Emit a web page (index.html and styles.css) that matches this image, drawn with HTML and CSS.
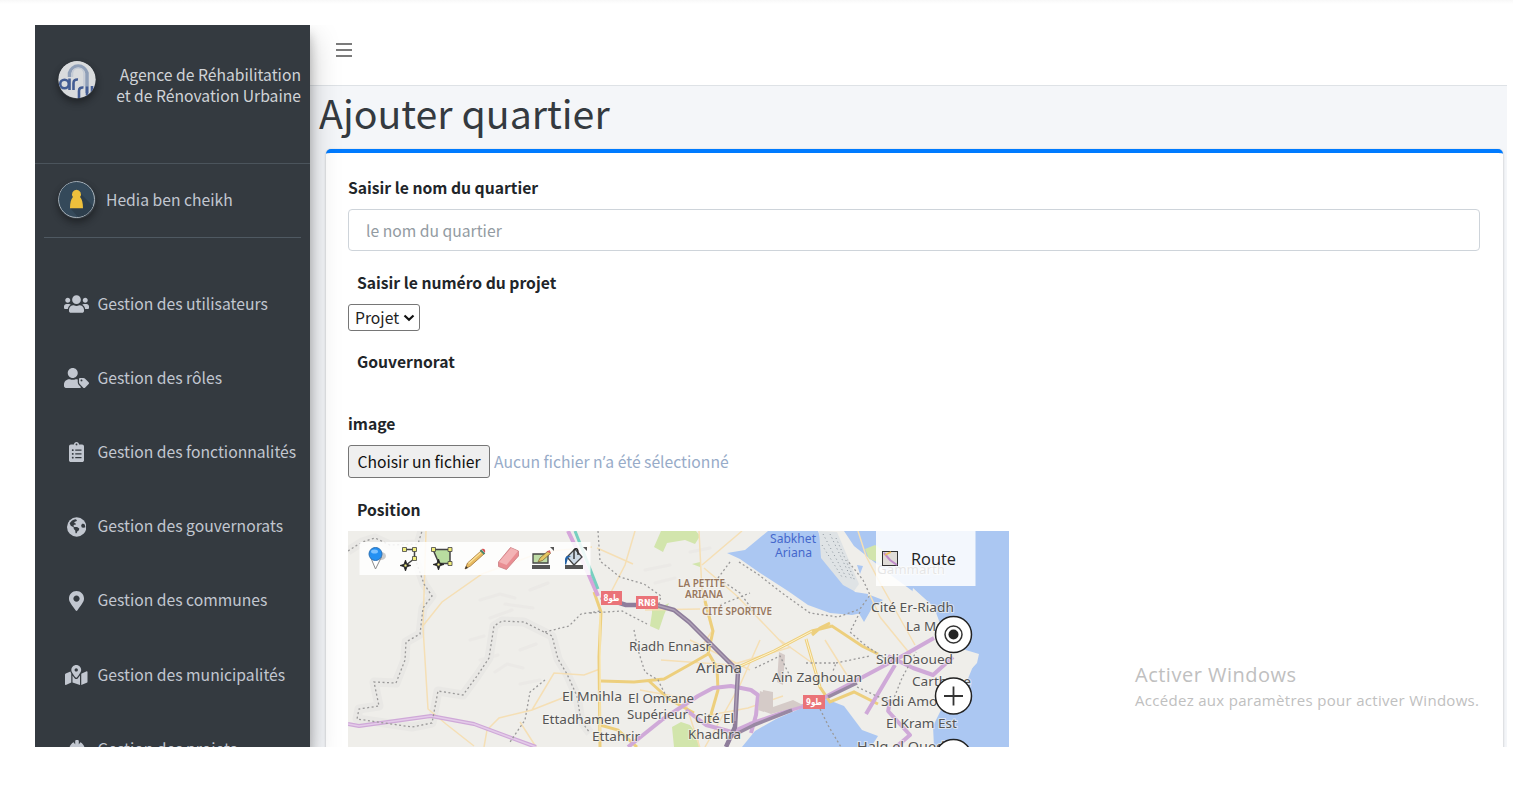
FILE: index.html
```html
<!DOCTYPE html>
<html lang="fr">
<head>
<meta charset="utf-8">
<title>Ajouter quartier</title>
<link rel="stylesheet" href="styles.css">
</head>
<body>
<div class="topline"></div>
<div class="app">
  <aside class="sidebar">
    <div class="brand">
      <svg class="avatar" viewBox="0 0 38 38">
        <defs><clipPath id="round"><circle cx="19" cy="18.500" r="18.700"/></clipPath></defs>
        <g clip-path="url(#round)" fill="none">
          <rect width="38" height="38" fill="#d9dbdd"/>
          <path d="M11.500 16V12a9 9 0 0 1 17.500 0v20" stroke="#8f9fb8" stroke-width="3.500"/>
          <path d="M14.500 16v-4a5.800 5.800 0 0 1 11.500 0v13" stroke="#c3cad5" stroke-width="1.500"/>
          <g stroke="#435c93" stroke-width="2.600">
            <circle cx="6.500" cy="23" r="4.300"/><path d="M11.500 17.500v11.500M15.500 29v-7q0-3.800 4.500-3.500M21 37v-7q0-4 4.500-3.500M29 25.500v8q1 3 5 1V25"/>
          </g>
        </g>
      </svg>
      <div class="brand-text">Agence de Réhabilitation<br>et de Rénovation Urbaine</div>
    </div>
    <div class="user">
      <svg class="avatar" viewBox="0 0 38 38">
        <circle cx="18.500" cy="18.500" r="18" fill="#34495a" stroke="#a9b3bb" stroke-width="1"/>
        <path d="M22 12l13 13a18 18 0 0 1-15 11l-7-8z" fill="#2d3e4c"/>
        <path d="M18.500 8.800a4.600 4.600 0 0 1 3.600 7.300c2 2.400 2.900 6 2.900 11.200H12c0-5.200.9-8.800 2.900-11.200a4.600 4.600 0 0 1 3.600-7.300z" fill="#eec03c"/>
      </svg>
      <span>Hedia ben cheikh</span>
    </div>
    <nav class="menu">
      <a class="item"><span class="ico"><svg viewBox="0 0 640 512"><path d="M96 224c35.300 0 64-28.700 64-64s-28.700-64-64-64-64 28.700-64 64 28.700 64 64 64zm448 0c35.300 0 64-28.700 64-64s-28.700-64-64-64-64 28.700-64 64 28.700 64 64 64zm32 32h-64c-17.600 0-33.500 7.100-45.100 18.600 40.300 22.100 68.900 62 75.100 109.400h66c17.700 0 32-14.300 32-32v-32c0-35.300-28.700-64-64-64zm-256 0c61.900 0 112-50.100 112-112S381.900 32 320 32 208 82.100 208 144s50.100 112 112 112zm76.800 32h-8.300c-20.800 10-43.900 16-68.500 16s-47.600-6-68.500-16h-8.300C179.600 288 128 339.600 128 403.200V432c0 26.500 21.500 48 48 48h288c26.500 0 48-21.500 48-48v-28.800c0-63.600-51.600-115.200-115.200-115.200zm-223.700-13.400C161.500 263.100 145.600 256 128 256H64c-35.300 0-64 28.700-64 64v32c0 17.700 14.300 32 32 32h65.900c6.300-47.400 34.900-87.300 75.200-109.400z"/></svg></span><span class="item-text">Gestion des utilisateurs</span></a>
      <a class="item"><span class="ico"><svg viewBox="0 0 640 512"><path d="M630.600 364.900l-90.300-90.200c-12-12-28.300-18.700-45.300-18.700h-79.300c-17.700 0-32 14.300-32 32v79.200c0 17 6.700 33.200 18.700 45.200l90.300 90.200c12.500 12.500 32.800 12.500 45.300 0l92.500-92.500c12.600-12.500 12.600-32.700.1-45.200zm-182.800-21c-13.300 0-24-10.700-24-24s10.700-24 24-24 24 10.700 24 24c0 13.200-10.700 24-24 24zm-223.800-88c70.700 0 128-57.300 128-128C352 57.300 294.700 0 224 0S96 57.300 96 128c0 70.600 57.300 127.900 128 127.900zm127.800 111.200V294c-12.200-3.600-24.900-6.200-38.200-6.200h-16.700c-22.200 10.200-46.900 16-72.900 16s-50.600-5.800-72.900-16h-16.700C60.200 287.900 0 348.100 0 422.300v41.600c0 26.500 21.500 48 48 48h352c15.500 0 29.100-7.500 37.900-18.900l-58-58c-18.100-18.100-28.100-42.200-28.100-67.900z"/></svg></span><span class="item-text">Gestion des rôles</span></a>
      <a class="item"><span class="ico"><svg viewBox="0 0 384 512"><path fill-rule="evenodd" d="M336 64h-80c0-35.300-28.700-64-64-64s-64 28.700-64 64H48C21.500 64 0 85.500 0 112v352c0 26.500 21.500 48 48 48h288c26.500 0 48-21.500 48-48V112c0-26.500-21.500-48-48-48zM96 424c-13.300 0-24-10.700-24-24s10.700-24 24-24 24 10.700 24 24-10.700 24-24 24zm0-96c-13.300 0-24-10.700-24-24s10.700-24 24-24 24 10.700 24 24-10.700 24-24 24zm0-96c-13.300 0-24-10.700-24-24s10.700-24 24-24 24 10.700 24 24-10.700 24-24 24zm96-192c13.300 0 24 10.700 24 24s-10.700 24-24 24-24-10.700-24-24 10.700-24 24-24zM160 192h160v32H160zM160 288h160v32H160zM160 384h160v32H160z"/></svg></span><span class="item-text">Gestion des fonctionnalités</span></a>
      <a class="item"><span class="ico"><svg viewBox="0 0 496 512"><circle cx="248" cy="256" r="248"/><path class="hole" d="M95 125c35-40 80-63 130-66l30 22-15 30-40 12-18 28 35 10 12 30-42 5-28 32 30 28 70 0 55 40-8 40-38 28-22 54-28 0-8-74-36-40-6-44-72-38-28-62zM372 190l34-26 48 26 16 70-40 18-50-12-18-40z"/></svg></span><span class="item-text">Gestion des gouvernorats</span></a>
      <a class="item"><span class="ico"><svg viewBox="0 0 384 512"><path d="M172.268 501.670C26.970 291.031 0 269.413 0 192 0 85.961 85.961 0 192 0s192 85.961 192 192c0 77.413-26.970 99.031-172.268 309.670-9.535 13.774-29.930 13.773-39.464 0zM192 272c44.183 0 80-35.817 80-80s-35.817-80-80-80-80 35.817-80 80 35.817 80 80 80z"/></svg></span><span class="item-text">Gestion des communes</span></a>
      <a class="item"><span class="ico"><svg viewBox="0 0 576 512"><path d="M288 0c-69.590 0-126 56.410-126 126 0 56.260 82.350 158.800 113.900 196.020 6.390 7.540 17.820 7.540 24.200 0C331.650 284.800 414 182.260 414 126 414 56.410 357.590 0 288 0zm0 168c-23.200 0-42-18.800-42-42s18.800-42 42-42 42 18.800 42 42-18.800 42-42 42zM20.120 215.950A32.006 32.006 0 0 0 0 245.660v250.320c0 11.320 11.430 19.060 21.940 14.860L160 448V214.920c-8.840-15.980-16.070-31.540-21.250-46.420L20.120 215.950zM288 359.670c-14.070 0-27.380-6.180-36.510-16.960-19.660-23.200-40.570-49.620-59.490-76.720v182l192 64V266c-18.920 27.090-39.820 53.520-59.490 76.720-9.130 10.770-22.440 16.950-36.510 16.950zm266.060-198.510L416 224v288l139.880-55.950A31.996 31.996 0 0 0 576 426.340V176.020c0-11.320-11.430-19.060-21.940-14.860z"/></svg></span><span class="item-text">Gestion des municipalités</span></a>
      <a class="item"><span class="ico"><svg viewBox="0 0 512 512"><path d="M50 350v-50c0-95 45-185 120-220l40 60V50q0-26 26-26h40q26 0 26 26v90l40-60c75 35 120 125 120 220v50zM0 400h512v30q0 18-18 18H18q-18 0-18-18z"/></svg></span><span class="item-text">Gestion des projets</span></a>
    </nav>
  </aside>
  <main class="main">
    <header class="navbar"><svg class="burger" viewBox="0 0 16 15"><path d="M0 2h16M0 8h16M0 14h16" stroke="#7b7b7b" stroke-width="2"/></svg></header>
    <h1 class="title">Ajouter quartier</h1>
    <section class="card">
      <label class="label">Saisir le nom du quartier</label>
      <input class="field" type="text" placeholder="le nom du quartier">
      <label class="label inset">Saisir le numéro du projet</label>
      <div class="select"><span>Projet</span><svg viewBox="0 0 12 8"><path d="M1.500 1.500L6 5.800l4.500-4.300" fill="none" stroke="#111" stroke-width="2.200"/></svg></div>
      <label class="label inset gov-label">Gouvernorat</label>
      <label class="label">image</label>
      <div class="file"><button class="file-btn">Choisir un fichier</button><span>Aucun fichier n<span class="apos">’</span>a été sélectionné</span></div>
      <label class="label inset">Position</label>
      <svg class="map" viewBox="348 531 661 216">
        <rect x="348" y="531" width="661" height="216" fill="#efeeea"/>
        <!-- relief shading -->
        <g fill="none" stroke="#e7e6e2" stroke-width="3" opacity=".6" stroke-linecap="round"><path d="M480 600l20-6 15 4M490 618l22-8M505 604l28 4M530 590l18-7M480 660l18-5M495 672l12-8 16 4M520 650l16-6M470 640l14-4M645 570l25-5M655 583l20-5M690 552l20-4M520 684l20-4"/></g>
        <!-- boundary halos -->
        <g fill="none" stroke="#e9e8e5" stroke-width="9" stroke-linejoin="round">
          <path d="M348 551l14-9 13-4 15 7 28-1 4-13M412 550l12 34 8 12-9 12-3 26-14 8-1 18-9 23-22-1 5 24-20 3-2 10 55 8 20-4 6-32 25 4 14-19 12-18 5-32 8-5 22 1 28 14 6 23 9 15 10 22 4 25 9 12"/>
        </g>
        <!-- parks -->
        <g fill="#d2e5ac"><path d="M661 531l-7 16 9 5 4-9 18-3 10 4 5-8-4-5zM652 600l9 7 8-4-5 12-5 15-9-4 2-13zM672 727l9-5 9 3 8 11 1 11h-25zM692 564l8-2v5z"/></g>
        <!-- water -->
        <g fill="#abc7f2">
          <path d="M768 531h50l10 30 27 31 13 2-1 18-15 3-22-2-22-8-20-14-28-18-20-14-13-6 18-3z"/>
          <path d="M844 531h165v216h-91l-3-23 15-17 35-21 11-27-15-2-16-25-19-31-38-28-34-27z"/>
          <path d="M742 747l13-16 21-12 28-12 22-8 18 7 18 24 16 6-7 11z"/>
          <path d="M857 565l6 1-3 8zM857 610l13-15 13 5-11 8-8 14z"/>
        </g>
        <path d="M865 549l10-4 14 9-6 10-14-5z" fill="#d2e5ac"/>
        <path d="M915 747l-8-24 2-28-6-30 18-27-12-25 4-25 21 19 8 22 17 19 20 6-2 9-12 13-2 20-21 12-9 18 1 21z" fill="#efeeea"/>
        <path d="M819 531l18 1 22 52-5 7-11-6-22-27z" fill="#dfe3e5"/>
        <path d="M823 534l24 45M830 534l22 46M822 545l20 32M836 538l19 43" stroke="#8a949c" stroke-width="1" stroke-dasharray="1 3"/>
        <!-- minor roads -->
        <g fill="none" stroke="#f5dfb5" stroke-width="1.500">
          <path d="M426 531l-3 96 5 82 18 15 28 22M422 627l20-25 40-28 60-22 50-5M484 747l3-17 12-12 33-8 22-37 30 2 16-6M532 710l38-15M520 722l16 25M607 600l18-35 10-34M633 564l-36-16M699 531l3 60 10 40-9 14M702 565l40-34M704 568l33 28 48 50M645 610l55-1M640 690l44 8 16 50M690 640l60 30M661 660l70 5 60-18M760 640l-20 45-35 62M780 640l35 25M825 640l25 40M870 595l10 22 31 38M858 531l8 25 13 25 36 64M710 715l38-7 35-12"/>
        </g>
        <g fill="none" stroke="#edcf7d" stroke-width="3">
          <path d="M594 592l7 20-2 45 1 90M601 681l33 1 30-3 25-14 19-11 5-23-8-30M709 654l8 14 1 22-10 35M736 668l38-17 38-20 20-5 30 20 16 8M812 635l8-7 10-5M806 639l14 48 10 15 24-10 24 12M649 681l20 18 25 14M600 725l18 5 19 17"/>
        </g>
        <g fill="none" stroke="#fff3cd" stroke-width="1"><path d="M600 612v120M736 668l38-17 38-20M806 639l14 48"/></g>
        <!-- major roads -->
        <g fill="none" stroke-linejoin="round">
          <path d="M568 531l20 42 10 23" stroke="#d6a6db" stroke-width="4"/><path d="M575 531l23 58" stroke="#77cfc0" stroke-width="3"/>
          <g stroke="#cfa9d8" stroke-width="4"><path d="M348 724l11 2 72-10 43 8 35 13 27 10M628 747l35-28 35-23 15-8 18-2 20 4 7 5-2 20-5 18M686 710l20 15 26 7 18-8 40-14 26-8 90-48 28-16M866 714l29-49M888 656l25 12 20 7 20-18M888 711l22 24-14 12M888 712l2-12"/></g>
          <path d="M348 724l11 2 72-10 43 8 35 13 27 10" stroke="#e4cbe9" stroke-width="1.500"/>
          <path d="M601 597l25 8 30 0 18 5 15 12 25 25 14 14 10 10-3 56-9 20" stroke="#8e7d9b" stroke-width="4.500"/>
          <path d="M656 605l18 5 15 12 25 25 24 24-3 50" stroke="#aea0b6" stroke-width="1.500"/>
          <path d="M730 737l24-12 38-15M828 697l29-14" stroke="#9988a3" stroke-width="3.500"/>
        </g>
        <path d="M779 652l6 3-2 30-6-3zM763 690l10 2v15l20-7 10 5-32 9-11-4zM760 691l5 2-1 19-6-2z" fill="#d5cbc8"/>
        <!-- administrative boundaries -->
        <g fill="none" stroke="#9a9999" stroke-width="1.300" stroke-dasharray="2 2.500">
          <path d="M348 551l14-9 13-4 15 7 28-1 4-13M412 550l12 34 8 12-9 12-3 26-14 8-1 18-9 23-22-1 5 24-20 3-2 10 55 8 20-4 6-32 25 4 14-19 12-18 5-32 8-5 22 1 28 14 6 23 9 15 10 22 4 25 9 12"/>
          <path d="M598 531l2 30 20 16 24 7 17 12-4 15M590 613l32-2 25 13M545 632l24-6 12-12 20-3M545 680l-15 12-5 28-15 22M634 630l4 20 7 22 13 8 10 20M720 605l30-12M730 562l-12 16 22 15 15 20M739 562l20 13 23 18 28 20 28 4 22-8 10-14-7-15-16-20M860 612l-10 20 15 13 19 13M806 663h30l-3 8M836 663l34-7M814 697l15 30 12 20M857 687l35 16 10-25 14-26M755 668l25-12 10 20"/>
        </g>
        <!-- route shields -->
        <g fill="#ea7378"><rect x="601" y="591" width="21" height="14"/><rect x="636" y="596" width="22" height="13"/><rect x="803" y="695" width="22" height="14"/></g>
        <g class="shield"><text x="603.500" y="600.500" textLength="16" lengthAdjust="spacingAndGlyphs">طو8</text><text x="638" y="606" textLength="18" lengthAdjust="spacingAndGlyphs">RN8</text><text x="806" y="704.500" textLength="16" lengthAdjust="spacingAndGlyphs">طو9</text></g>
        <g class="places brown">
          <text x="678" y="587" textLength="47" lengthAdjust="spacingAndGlyphs">LA PETITE</text><text x="685" y="598" textLength="38" lengthAdjust="spacingAndGlyphs">ARIANA</text><text x="702" y="614.500" textLength="70" lengthAdjust="spacingAndGlyphs">CITÉ SPORTIVE</text>
        </g>
        <g class="places blue"><text x="770" y="543" textLength="46" lengthAdjust="spacingAndGlyphs">Sabkhet</text><text x="775" y="557" textLength="37" lengthAdjust="spacingAndGlyphs">Ariana</text></g>
        <g class="places">
          <text x="629" y="650.500" textLength="82" lengthAdjust="spacingAndGlyphs">Riadh Ennasr</text>
          <text x="696" y="673" class="big" textLength="46" lengthAdjust="spacingAndGlyphs">Ariana</text>
          <text x="772" y="682" textLength="90" lengthAdjust="spacingAndGlyphs">Ain Zaghouan</text>
          <text x="562" y="701" textLength="60" lengthAdjust="spacingAndGlyphs">El Mnihla</text>
          <text x="542" y="723.500" textLength="78" lengthAdjust="spacingAndGlyphs">Ettadhamen</text>
          <text x="592" y="741" textLength="48" lengthAdjust="spacingAndGlyphs">Ettahrir</text>
          <text x="628" y="703" textLength="66" lengthAdjust="spacingAndGlyphs">El Omrane</text>
          <text x="627" y="719" textLength="61" lengthAdjust="spacingAndGlyphs">Supérieur</text>
          <text x="695" y="723" textLength="39" lengthAdjust="spacingAndGlyphs">Cité El</text>
          <text x="688" y="739" textLength="53" lengthAdjust="spacingAndGlyphs">Khadhra</text>
          <text x="877" y="573.500" textLength="68" lengthAdjust="spacingAndGlyphs">Gammarth</text>
          <text x="871" y="612" textLength="83" lengthAdjust="spacingAndGlyphs">Cité Er-Riadh</text>
          <text x="906" y="631" textLength="57" lengthAdjust="spacingAndGlyphs">La Marsa</text>
          <text x="876" y="664" textLength="77" lengthAdjust="spacingAndGlyphs">Sidi Daoued</text>
          <text x="912" y="686" textLength="59" lengthAdjust="spacingAndGlyphs">Carthage</text>
          <text x="881" y="706" textLength="62" lengthAdjust="spacingAndGlyphs">Sidi Amor</text>
          <text x="886" y="728" textLength="71" lengthAdjust="spacingAndGlyphs">El Kram Est</text>
          <text x="857" y="751" textLength="88" lengthAdjust="spacingAndGlyphs">Halq el Oued</text>
        </g>
        <!-- drawing toolbar -->
        <rect x="359.500" y="542" width="231" height="33" fill="#fff" opacity=".85"/>
        <ellipse cx="381" cy="556" rx="5" ry="4" fill="#ccc"/>
        <path d="M370.500 557l5 12 6-12z" fill="#fff" stroke="#8b8b8b"/>
        <circle cx="375.500" cy="554" r="6.500" fill="#2490f2" stroke="#2d72b6"/><ellipse cx="374.500" cy="551.500" rx="3.500" ry="2" fill="#7cc1ff"/>
        <path d="M404.500 549.500h10v9l-9 7" fill="none" stroke="#444" stroke-width="1.500"/>
        <path d="M433 549.500h17v14h-11z" fill="#b9dda0" stroke="#444" stroke-width="1.500"/>
        <path d="M400 565.500l4-1.200 1.500-4.300 1.500 4.300 4 1.200-4 1.200-1.500 4.300-1.500-4.300zM433 564.500l4-1.200 1.500-4.300 1.500 4.300 4 1.200-4 1.200-1.500 4.300-1.500-4.300z" fill="#222" stroke="#222" stroke-width=".8"/>
        <g fill="#f2ee7b" stroke="#444" stroke-width=".8"><path d="M402.500 547.500h4v4h-4zM412.500 547.500h4v4h-4zM412.500 556.500h4v4h-4zM431.500 547.500h4v4h-4zM448 547.500h4v4h-4zM448 561.500h4v4h-4z"/><circle cx="405.500" cy="565.500" r="1.500"/><circle cx="438.500" cy="564.500" r="1.500"/></g>
        <path d="M465 569l2.500-6 14-12.500 3 3-14 12.500z" fill="#e8bb61" stroke="#a27436" stroke-width=".8"/><path d="M468.500 563.500l12.500-11" stroke="#fbe39c" stroke-width="1.200"/><path d="M480.500 550l4 4" stroke="#49866e" stroke-width="2"/><path d="M481.500 549q4.500-1 3.500 4z" fill="#d95252"/><path d="M465 569l1-3 2 2z" fill="#333"/>
        <path d="M498.500 562l12-14.500 8 3.500v5l-12 13.500-8-3z" fill="#e98d92" stroke="#c87c80" stroke-width=".8"/><path d="M499 562l12-14 7 3-11.500 14z" fill="#f3b3b5"/>
        <path d="M533 554h15v9h-15z" fill="#bedca6" stroke="#444" stroke-width="1.300"/><path d="M538 562l2-4 8-7 2.500 2.500-8 7z" fill="#e4c561" stroke="#775c30" stroke-width=".7"/><path d="M546.500 552l3-2 1.500 3z" fill="#d65e5e"/><path d="M532 565h18v4h-18zM565 565h18v4h-18z" fill="#555"/>
        <path d="M550 547h4v4zM583 547h4v4z" fill="#555"/>
        <path d="M567 557l8-8 7 8-8 8z" fill="#cddae6" stroke="#444" stroke-width="1.300"/><path d="M574 559v-9q3-3 4 1v4" fill="none" stroke="#222" stroke-width="1.300"/><path d="M565 564v-5q1-4 6-3l-3 2-2 7z" fill="#2362a6"/>
        <!-- layer switcher -->
        <rect x="876" y="531" width="99.500" height="55" fill="#fff" opacity=".85"/>
        <rect x="882.500" y="551.500" width="15" height="14" fill="#dfdcd7" stroke="#333"/><path d="M884 553l6 7 7 5" fill="none" stroke="#c18ccb" stroke-width="2"/><path d="M885 555l6-3" stroke="#efbd5b" stroke-width="1.500"/>
        <text class="route" x="911" y="565" textLength="45" lengthAdjust="spacingAndGlyphs">Route</text>
        <!-- map controls -->
        <g fill="#fff" stroke="#222" stroke-width="1.500"><circle cx="953.500" cy="634.500" r="18"/><circle cx="953.500" cy="696" r="18"/><circle cx="953.500" cy="757.500" r="18"/></g>
        <circle cx="953.500" cy="634.500" r="8.500" fill="none" stroke="#333" stroke-width="1.500"/><circle cx="953.500" cy="634.500" r="5" fill="#222"/>
        <path d="M944 696h19M953.500 686.500v19" stroke="#333" stroke-width="1.800"/>
      </svg>
      <div class="activate"><span class="activate-title">Activer Windows</span><span class="activate-sub">Accédez aux paramètres pour activer Windows.</span></div>
    </section>
  </main>
</div>
</body>
</html>
```
FILE: styles.css
```css
* { box-sizing: border-box; }
body { margin: 0; width: 1513px; height: 790px; overflow: hidden; background: #fff; color: #212529; font: 15.7px/22px "Noto Sans CJK SC", "Open Sans", sans-serif; }
.topline { height: 4px; background: linear-gradient(#f8f8f8, #fff); }
.app { display: flex; height: 722px; width: 1472px; margin: 21px 0 0 35px; overflow: hidden; background: #f4f6f9; }
.sidebar { position: relative; z-index: 1; flex: none; width: 275px; height: 722px; background: #343a40; color: #c2c7d0; box-shadow: 0 14px 28px rgba(0,0,0,.25), 0 10px 10px rgba(0,0,0,.22); }
.avatar { flex: none; width: 38px; height: 38px; border-radius: 50%; box-shadow: 0 3px 6px rgba(0,0,0,.23), 0 4px 8px rgba(0,0,0,.19); }
.brand { display: flex; justify-content: space-between; height: 139px; padding: 36px 9px 0 23px; border-bottom: 1px solid #4b545c; }
.brand-text { padding-top: 3px; text-align: right; line-height: 21px; color: #d0d3d7; white-space: nowrap; }
.user { display: flex; align-items: center; gap: 10px; height: 74px; margin: 0 9px; padding: 0 0 1px 14px; border-bottom: 1px solid #4f5962; }
.menu { padding-top: 30px; }
.item { display: flex; align-items: center; height: 74.200px; white-space: nowrap; }
.item-text { padding-bottom: 3px; }
.ico { display: flex; justify-content: center; width: 35px; margin: 0 3.500px 2px 24px; }
.ico svg { height: 20px; fill: #c2c7d0; }
.ico .hole { fill: #343a40; }
.main { flex: 1; min-width: 0; }
.navbar { height: 61px; padding: 17px 0 0 26px; background: #fff; border-bottom: 1px solid #dee2e6; }
.burger { display: block; width: 16px; height: 15px; }
.title { margin: 0; padding-left: 9px; height: 63px; font-size: 39.300px; font-weight: 400; line-height: 51px; color: #343a40; }
.card { position: relative; margin: 0 4px 0 16px; height: 700px; padding: 23px 23px 0 22px; background: #fff; border-top: 4px solid #007bff; border-radius: 5px; box-shadow: 0 0 1px rgba(0,0,0,.13), 0 1px 3px rgba(0,0,0,.2); }
.label { display: block; height: 22px; line-height: 24px; font-weight: 700; }
.inset { padding-left: 9px; }
.field { display: block; width: 100%; height: 42px; margin: 11px 0 20px; padding: 0 17px; border: 1px solid #ced4da; border-radius: 4px; font: inherit; }
.field::placeholder { color: #939ba2; opacity: 1; }
.select { display: flex; align-items: center; justify-content: space-between; width: 72px; height: 27px; margin: 11px 0 19px; padding: 0 4px 0 6px; border: 1px solid #767676; border-radius: 3px; color: #222; }
.select svg { width: 12px; height: 8px; }
.gov-label { margin-bottom: 40px; }
.file { display: flex; align-items: center; gap: 4px; margin: 11px 0 20px; height: 33px; color: #97abc8; }
.apos { font-family: "Open Sans", sans-serif; line-height: 1; }
.file-btn { width: 142px; height: 33px; padding: 0; border: 1px solid #767676; border-radius: 3px; background: #efefef; color: #111; font: inherit; white-space: nowrap; }
.map { display: block; width: 661px; height: 216px; margin-top: 11px; }
.places { font: 13px "Noto Sans", sans-serif; fill: #555; stroke: #f6f5f1; stroke-width: 2px; stroke-opacity: .6; paint-order: stroke; }
.big { font-size: 15px; }
.brown { font-size: 10.500px; font-weight: 600; fill: #98775e; }
.blue { font-size: 12px; fill: #4568cc; stroke: none; }
.shield { font: bold 9px "DejaVu Sans", sans-serif; fill: #fff; }
.route { font: 17px "Open Sans", sans-serif; fill: #222; }
.activate { position: absolute; left: 809px; top: 508px; display: flex; flex-direction: column; font-family: "Open Sans", sans-serif; color: #c0c0c0; white-space: nowrap; }
.activate-title { font-size: 20px; line-height: 28px; letter-spacing: .5px; }
.activate-sub { font-size: 15px; line-height: 22px; letter-spacing: .3px; }
```
